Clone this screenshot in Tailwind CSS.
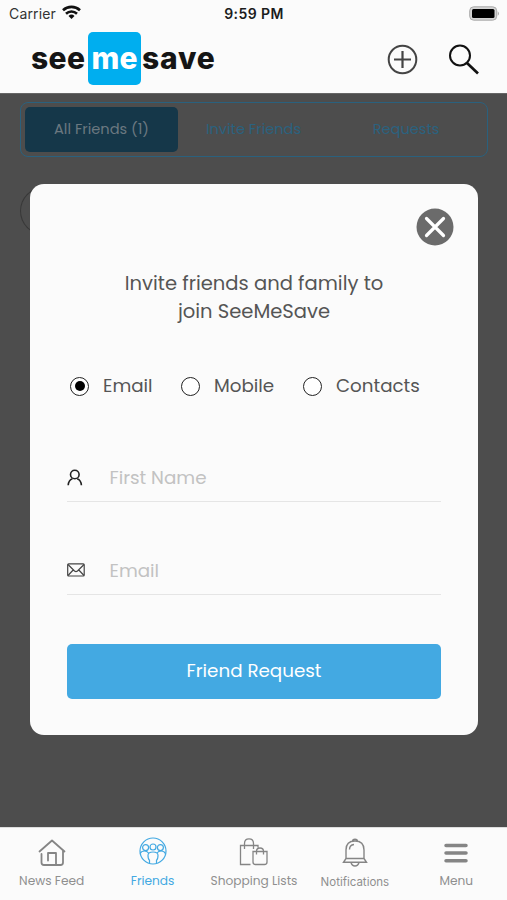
<!DOCTYPE html>
<html lang="en">
<head>
<meta charset="utf-8">
<meta name="viewport" content="width=device-width, initial-scale=1">
<title>SeeMeSave</title>
<script src="https://cdn.jsdelivr.net/npm/@tailwindcss/browser@4"></script>
</head>
<body class="bg-[#fbfbfb]">
<div class="relative flex h-[900px] w-[507px] flex-col overflow-hidden bg-[#fbfbfb] font-['Poppins','Inter',sans-serif] text-[#555]">
  <header class="h-[93px] shrink-0">
    <div class="grid h-7 grid-cols-3 items-center pr-[7px] pl-[9px] font-['Inter',sans-serif] text-[14px] text-[#1c1c1c]">
      <div class="-mt-0.5 flex items-center gap-1.5"><span class="tracking-[0.15px] text-[#333]">Carrier</span>
        <svg class="-mt-0.5 h-[14px] w-[19px]" viewBox="0 0 19 14" fill="none" stroke="#111" stroke-width="2.6"><path d="M1 5.200a12.400 12.400 0 0 1 17 0M4 8.700a8 8 0 0 1 11 0"/><path d="M9.500 14L6.500 11a4.300 4.300 0 0 1 6 0z" fill="#111" stroke="none"/></svg>
      </div>
      <span class="-mt-0.5 -ml-[1px] text-center font-semibold tracking-[0.4px] whitespace-nowrap">9:59 PM</span>
      <svg class="-mt-[2px] h-[15px] w-[31px] justify-self-end" viewBox="0 0 31 15"><rect x=".7" y=".8" width="27" height="13.400" rx="4" fill="#d4d4d4" stroke="#aaa"/><rect x="3" y="3" width="22.500" height="9" rx="1.500"/><path d="M28.800 5.200q2 2.300 0 4.600z" fill="#999"/></svg>
    </div>
    <div class="flex h-[65px] items-center pl-[31px] pr-[28px]">
      <div class="-mt-[2px] flex items-center font-['Inter',sans-serif] text-[30px] font-extrabold text-[#151515]">
        <span class="-mt-[2px] w-[57px] whitespace-nowrap tracking-[0.4px]">see</span>
        <span class="-mt-[2px] flex h-[53px] w-[53px] items-center justify-center rounded-[5px] bg-[#00aeef] text-white"><span class="tracking-[0.2px]">me</span></span>
        <span class="-mt-[2px] ml-[1px] tracking-[0.8px]">save</span>
      </div>
      <svg class="ml-auto -mt-[3px] size-[31px]" viewBox="0 0 31 31" fill="none" stroke="#444" stroke-width="2"><circle cx="15.500" cy="15.500" r="13.800"/><path d="M15.500 7v17M7 15.500h17" stroke-width="2.200"/></svg>
      <svg class="-mt-[2px] ml-[30px] size-[31px]" viewBox="0 0 31 31" fill="none" stroke="#111" stroke-width="2"><circle cx="12" cy="11.500" r="10"/><path d="M19 19l11 10.500" stroke-width="2.700"/></svg>
    </div>
  </header>

  <main class="flex-1 bg-[#4d4d4d] px-5 pt-[9px] shadow-[inset_0_1px_0_#666]">
    <div class="flex h-[55px] w-[468px] rounded-[8px] border-[1.500px] border-[#2a617e] p-1 text-[14.600px] text-[#2b627f]">
      <div class="flex w-[153px] items-center justify-center rounded-[5px] bg-[#153749] pt-px text-[#6b7880]">All Friends (1)</div>
      <div class="flex w-[151px] items-center justify-center pt-px">Invite Friends</div>
      <div class="flex w-[154px] items-center justify-center pt-px">Requests</div>
    </div>
    <div class="mt-[30px] h-[48px] w-[60px] rounded-l-full border border-r-0 border-[#383838]"></div>
  </main>

  <nav class="grid h-[73px] shrink-0 grid-cols-5 border-t border-[#ddd] bg-[#fbfbfb] text-[12.200px] text-[#8f8f8f]">
    <a class="flex flex-col items-center whitespace-nowrap pt-[9px]">
      <svg class="ml-[2px] h-[34px] w-[30px]" viewBox="0 0 30 34" fill="none" stroke="#858585" stroke-width="1.800" stroke-linecap="round" stroke-linejoin="round"><path d="M2.500 14.500L15 3.500l12.500 11M4.500 17v8.500q0 2.500 2.500 2.500h16.500q2.500 0 2.500-2.500V14M11 23.500v-7.500h8V28"/></svg>
      <span class="ml-[2px] leading-5">News Feed</span>
    </a>
    <a class="flex flex-col items-center whitespace-nowrap pt-[9px] text-[#43a9e2]">
      <svg class="ml-[2px] h-[34px] w-[30px]" viewBox="0 0 30 34" fill="none" stroke="#43a9e2" stroke-width="1.200"><circle cx="15" cy="14" r="13"/><circle cx="7.600" cy="10.600" r="3"/><circle cx="15" cy="10" r="3"/><circle cx="22.400" cy="10.600" r="3"/><path d="M2.200 16.500q1-2.500 4.300-2.500 2.500 0 4 2M19 16q1.500-2 4-2 3.300 0 4.300 2.500M11.500 26.300v-3q-1.500-1-1.500-5 0-3.300 5-3.300t5 3.300q0 4-1.500 5v3"/></svg>
      <span class="ml-[1px] leading-5">Friends</span>
    </a>
    <a class="flex flex-col items-center whitespace-nowrap pt-[9px]">
      <svg class="ml-[1px] h-[34px] w-[32px]" viewBox="0 0 32 34" fill="none" stroke="#858585" stroke-width="1.300"><path d="M12.500 27.500H2.500V8.500h17.500v2M6.500 12V6.500q0-4.700 4.500-4.700T15.500 6.500V12M15 14.500h14v10.500q0 2.500-2.500 2.500h-9q-2.500 0-2.500-2.500zM18.500 17.500v-3q0-3.500 3.500-3.500t3.500 3.500v3"/></svg>
      <span class="ml-[1px] leading-5">Shopping Lists</span>
    </a>
    <a class="flex flex-col items-center whitespace-nowrap pt-[9px]">
      <svg class="h-[34px] w-[28px]" viewBox="0 0 28 34" fill="none" stroke="#858585" stroke-width="1.400"><path d="M5 21.500V13q0-9 9-9t9 9v8.500zM5 21.500L2.500 25.300h23L23 21.500M11.500 4.500q0-2.300 2.500-2.300t2.500 2.300M10 25.500q1 3.500 4 3.500t4-3.500M8.500 12.500q0-4.500 4.500-5"/></svg>
      <span class="mt-px font-['Inter',sans-serif] text-[11.500px] leading-5">Notifications</span>
    </a>
    <a class="flex flex-col items-center whitespace-nowrap pt-[9px]">
      <svg class="h-[34px] w-[26px]" viewBox="0 0 26 34" fill="none" stroke="#858585" stroke-width="3.500" stroke-linecap="round"><path d="M3 8.500h20M3 16h20M3 23.700h20"/></svg>
      <span class="leading-5">Menu</span>
    </a>
  </nav>

  <section role="dialog" class="absolute top-[184px] left-[30px] flex h-[551px] w-[448px] flex-col rounded-[14px] bg-[#fbfbfb] px-[37px] pt-6">
    <button aria-label="Close" class="-mr-[13px] self-end">
      <svg class="block size-[38px]" viewBox="0 0 38 38"><circle cx="19" cy="19" r="18.500" fill="#6b6b6b"/><path d="M10.500 10.500l17 17M27.500 10.500l-17 17" stroke="#fff" stroke-width="3.200" stroke-linecap="round"/></svg>
    </button>
    <h1 class="mt-6 text-center text-[19.550px] leading-[27.500px]">Invite friends and family to<br>join SeeMeSave</h1>
    <div class="mt-[45px] ml-[3px] flex h-8 items-center text-[18.300px]">
      <label class="flex w-[111px] items-center gap-[14px]"><span class="flex size-[19px] items-center justify-center rounded-full border-[1.500px] border-[#222] bg-white"><span class="size-[10px] rounded-full bg-black"></span></span>Email</label>
      <label class="flex w-[122px] items-center gap-[14px]"><span class="size-[19px] rounded-full border-[1.500px] border-[#222] bg-white"></span>Mobile</label>
      <label class="flex items-center gap-[14px]"><span class="size-[19px] rounded-full border-[1.500px] border-[#222] bg-white"></span>Contacts</label>
    </div>
    <div class="mt-[52px] flex h-[48px] items-center border-b border-[#e5e5e5] text-[18.300px] text-[#c2c2c2]">
      <svg class="-mt-px h-[17px] w-[16px]" viewBox="0 0 16 17" fill="none" stroke="#222" stroke-width="1.600"><circle cx="7.800" cy="5.500" r="4.300"/><path d="M1.200 16.200q.3-5 4.200-6.500M14.400 16.200q-.3-5-4.200-6.500"/></svg>
      <span class="ml-[26.500px]">First Name</span>
    </div>
    <div class="mt-[45px] flex h-[48px] items-center border-b border-[#e5e5e5] text-[18.300px] text-[#c2c2c2]">
      <svg class="-mt-[2px] h-[14px] w-[18px]" viewBox="0 0 18 14" fill="none" stroke="#444" stroke-width="1.200"><rect x=".7" y=".8" width="16.500" height="12.200" rx="1"/><path d="M1 1.500L7.500 8q1.500 1.200 3 0L17 1.500M1 12.500L6.200 7M17 12.500L11.800 7"/></svg>
      <span class="ml-[24.500px]">Email</span>
    </div>
    <button class="mt-[48.500px] h-[55px] w-[374px] shrink-0 rounded-[5px] bg-[#43a9e2] text-[18.300px] text-white">Friend Request</button>
  </section>
</div>
</body>
</html>
